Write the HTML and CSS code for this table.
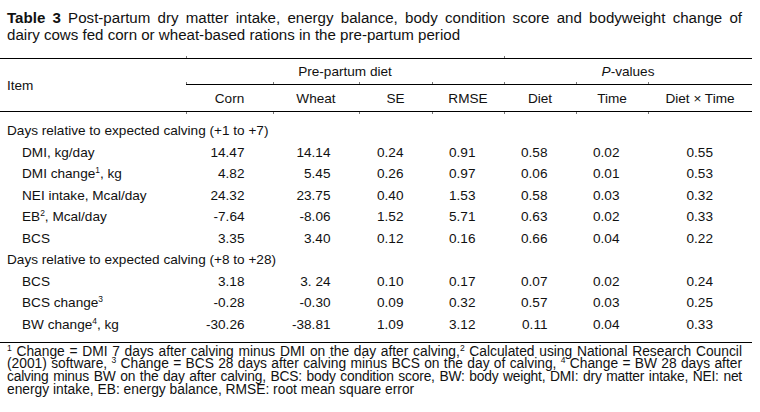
FILE: index.html
```html
<!DOCTYPE html>
<html lang="en">
<head>
<meta charset="utf-8">
<title>Table 3</title>
<link rel="stylesheet" href="styles.css">
</head>
<body>
<div class="page">
  <p class="title"><span class="line"><b>Table 3</b> Post-partum dry matter intake, energy balance, body condition score and bodyweight change of</span> <span class="line last">dairy cows fed corn or wheat-based rations in the pre-partum period</span></p>

  <div class="thead">
    <div class="h-item">Item</div>
    <div class="h-group g1">Pre-partum diet</div>
    <div class="h-group g2"><i>P</i>-values</div>
    <div class="h-col">Corn</div>
    <div class="h-col">Wheat</div>
    <div class="h-col">SE</div>
    <div class="h-col">RMSE</div>
    <div class="h-col">Diet</div>
    <div class="h-col">Time</div>
    <div class="h-col">Diet × Time</div>
  </div>

  <div class="tbody">
    <div class="section">Days relative to expected calving (+1 to +7)</div>

    <div class="label">DMI, kg/day</div>
    <div class="num">14.47</div><div class="num">14.14</div><div class="num">0.24</div><div class="num">0.91</div><div class="num">0.58</div><div class="num">0.02</div><div class="num last">0.55</div>

    <div class="label">DMI change<sup>1</sup>, kg</div>
    <div class="num">4.82</div><div class="num">5.45</div><div class="num">0.26</div><div class="num">0.97</div><div class="num">0.06</div><div class="num">0.01</div><div class="num last">0.53</div>

    <div class="label">NEI intake, Mcal/day</div>
    <div class="num">24.32</div><div class="num">23.75</div><div class="num">0.40</div><div class="num">1.53</div><div class="num">0.58</div><div class="num">0.03</div><div class="num last">0.32</div>

    <div class="label">EB<sup>2</sup>, Mcal/day</div>
    <div class="num">-7.64</div><div class="num">-8.06</div><div class="num">1.52</div><div class="num">5.71</div><div class="num">0.63</div><div class="num">0.02</div><div class="num last">0.33</div>

    <div class="label">BCS</div>
    <div class="num">3.35</div><div class="num">3.40</div><div class="num">0.12</div><div class="num">0.16</div><div class="num">0.66</div><div class="num">0.04</div><div class="num last">0.22</div>

    <div class="section">Days relative to expected calving (+8 to +28)</div>

    <div class="label">BCS</div>
    <div class="num">3.18</div><div class="num">3. 24</div><div class="num">0.10</div><div class="num">0.17</div><div class="num">0.07</div><div class="num">0.02</div><div class="num last">0.24</div>

    <div class="label">BCS change<sup>3</sup></div>
    <div class="num">-0.28</div><div class="num">-0.30</div><div class="num">0.09</div><div class="num">0.32</div><div class="num">0.57</div><div class="num">0.03</div><div class="num last">0.25</div>

    <div class="label">BW change<sup>4</sup>, kg</div>
    <div class="num">-30.26</div><div class="num">-38.81</div><div class="num">1.09</div><div class="num">3.12</div><div class="num">0.11</div><div class="num">0.04</div><div class="num last">0.33</div>
  </div>

  <p class="notes"><span class="line"><sup>1</sup> Change = DMI 7 days after calving minus DMI on the day after calving,<sup>2</sup> Calculated using National Research Council</span> <span class="line">(2001) software, <sup>3</sup> Change = BCS 28 days after calving minus BCS on the day of calving, <sup>4</sup> Change = BW 28 days after</span> <span class="line tight">calving minus BW on the day after calving, BCS: body condition score, BW: body weight, DMI: dry matter intake, NEI: net</span> <span class="line last">energy intake, EB: energy balance, RMSE: root mean square error</span></p>
</div>
</body>
</html>
```
FILE: styles.css
```css
html, body {
  margin: 0;
  padding: 0;
  background: #ffffff;
}

.page {
  width: 760px;
  font-family: "Liberation Sans", Arial, sans-serif;
  color: #111111;
}

.line {
  display: block;
  white-space: nowrap;
  text-align: justify;
  text-align-last: justify;
}

.line.last {
  text-align-last: left;
}

.line.tight {
  letter-spacing: -0.2px;
}

.title {
  margin: 8.5px 0 0 0;
  padding: 0 18px 0 7px;
  font-size: 15.1px;
  line-height: 17px;
}

.title b {
  font-weight: bold;
}

.thead,
.tbody {
  width: 752px;
  display: grid;
  grid-template-columns: 186px 87px 86px 73px 72px 72px 72px 104px;
  font-size: 13.6px;
}

.thead {
  margin-top: 15.5px;
  border-top: 1px solid #000;
  grid-template-rows: 26px 27px;
}

.h-item {
  grid-column: 1;
  grid-row: 1 / 3;
  display: flex;
  align-items: center;
  padding-left: 7px;
  border-bottom: 1px solid #000;
}

.h-group {
  grid-row: 1;
  display: flex;
  align-items: center;
  justify-content: center;
  border-bottom: 1px solid #000;
  position: relative;
}

.h-group.g1 { grid-column: 2 / 6; }
.h-group.g2 { grid-column: 6 / 9; }

.h-group::before {
  content: "";
  position: absolute;
  left: 0;
  top: -3px;
  width: 1px;
  height: 2px;
  background: #777;
}

.h-col {
  grid-row: 2;
  display: flex;
  align-items: center;
  justify-content: center;
  border-bottom: 1px solid #000;
  position: relative;
}

.h-col::before,
.h-col::after {
  content: "";
  position: absolute;
  left: 0;
  width: 1px;
  height: 2px;
  background: #777;
}

.h-col::before { top: -3px; }
.h-col::after { bottom: -3px; }

.tbody {
  grid-auto-rows: 21.5px;
  padding: 8px 0 7px 0;
  border-bottom: 1px solid #000;
}

.section {
  grid-column: 1 / -1;
  padding-left: 7px;
  line-height: 21.5px;
  white-space: nowrap;
}

.label {
  padding-left: 22px;
  line-height: 21.5px;
  white-space: nowrap;
}

.num {
  text-align: right;
  padding-right: 28.5px;
  line-height: 21.5px;
  white-space: nowrap;
}

.num.last {
  padding-right: 39px;
}

sup {
  font-size: 0.62em;
  line-height: 0;
  vertical-align: 0.55em;
}

.notes {
  margin: 0;
  padding: 2.5px 18px 0 7px;
  font-size: 13.8px;
  line-height: 12.9px;
}
```
